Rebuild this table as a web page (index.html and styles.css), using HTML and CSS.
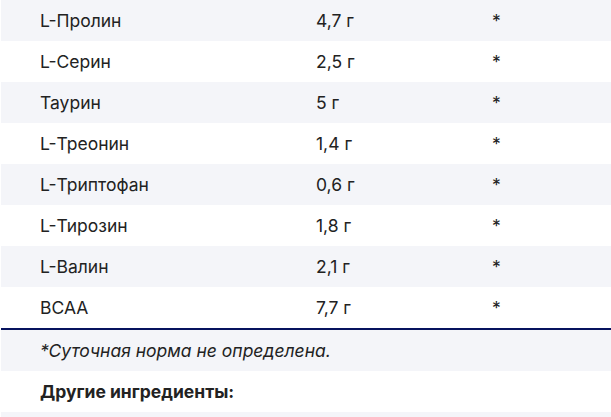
FILE: index.html
```html
<!DOCTYPE html>
<html lang="ru">
<head>
<meta charset="utf-8">
<link rel="stylesheet" href="styles.css">
</head>
<body>
<div class="facts">
  <div class="row odd"><div class="c c1">L-Пролин</div><div class="c c2">4,7 г</div><div class="c c3">*</div></div>
  <div class="row"><div class="c c1">L-Серин</div><div class="c c2">2,5 г</div><div class="c c3">*</div></div>
  <div class="row odd"><div class="c c1">Таурин</div><div class="c c2">5 г</div><div class="c c3">*</div></div>
  <div class="row"><div class="c c1">L-Треонин</div><div class="c c2">1,4 г</div><div class="c c3">*</div></div>
  <div class="row odd"><div class="c c1">L-Триптофан</div><div class="c c2">0,6 г</div><div class="c c3">*</div></div>
  <div class="row"><div class="c c1">L-Тирозин</div><div class="c c2">1,8 г</div><div class="c c3">*</div></div>
  <div class="row odd"><div class="c c1">L-Валин</div><div class="c c2">2,1 г</div><div class="c c3">*</div></div>
  <div class="row last"><div class="c c1">BCAA</div><div class="c c2">7,7 г</div><div class="c c3">*</div></div>
  <div class="note odd"><em>*Суточная норма не определена.</em></div>
  <div class="note"><strong>Другие ингредиенты:</strong></div>
  <div class="note odd"></div>
</div>
</body>
</html>
```
FILE: styles.css
```css
html, body {
  margin: 0;
  padding: 0;
  background: #ffffff;
}
body {
  font-family: Inter, "Liberation Sans", Arial, sans-serif;
  font-size: 17.5px;
  color: #222222;
  overflow: hidden;
}
.facts {
  margin-left: 1px;
  display: flex;
  flex-direction: column;
}
.row {
  display: grid;
  grid-template-columns: 276px 176px 1fr;
  height: 41px;
  align-items: center;
  background: #ffffff;
}
.odd {
  background: #f4f5f9;
}
.row.last {
  border-bottom: 2px solid #07135e;
}
.c {
  padding-left: 39px;
  line-height: 20px;
}
.note {
  height: 41px;
  display: flex;
  align-items: center;
  padding-left: 39px;
  background: #ffffff;
}
.note.odd {
  background: #f4f5f9;
}
.note strong {
  font-weight: 700;
}
```
